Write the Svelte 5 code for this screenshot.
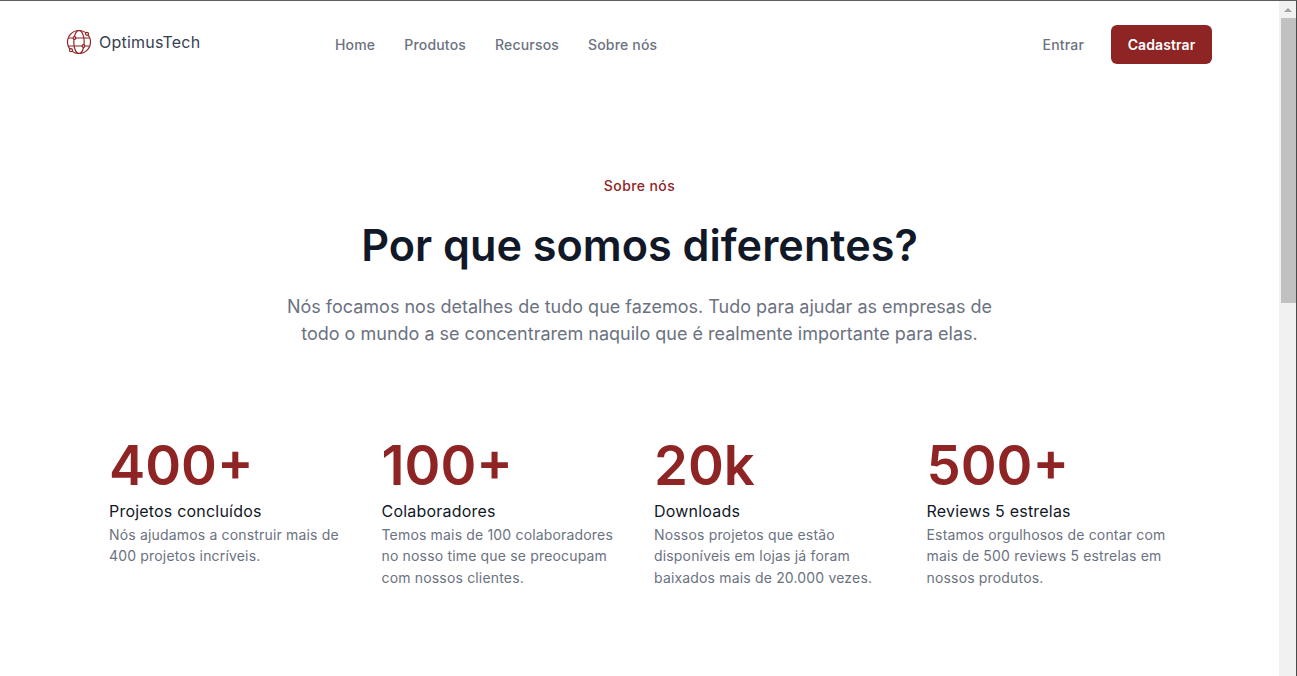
<script lang="ts">
  const links = ['Home', 'Produtos', 'Recursos', 'Sobre nós'];

  const stats = [
    { value: '400+', title: 'Projetos concluídos', text: 'Nós ajudamos a construir mais de 400 projetos incríveis.' },
    { value: '100+', title: 'Colaboradores', text: 'Temos mais de 100 colaboradores no nosso time que se preocupam com nossos clientes.' },
    { value: '20k', title: 'Downloads', text: 'Nossos projetos que estão disponíveis em lojas já foram baixados mais de 20.000 vezes.' },
    { value: '500+', title: 'Reviews 5 estrelas', text: 'Estamos orgulhosos de contar com mais de 500 reviews 5 estrelas em nossos produtos.' }
  ];
</script>

<div class="window">
  <main class="page">
    <header class="nav">
      <a class="brand" href="#top">
        <svg width="26" height="26" viewBox="0 0 26 26" fill="none" stroke="#8f2424" stroke-width="1.2">
          <circle cx="13" cy="13" r="11.5" />
          <ellipse cx="13" cy="13" rx="5.2" ry="11.5" />
          <path d="M2.4 9h21.2M2.4 17h21.2" />
          <circle cx="21" cy="4.8" r="1.5" fill="#fff" />
          <circle cx="5" cy="21.2" r="1.5" fill="#fff" />
          <circle cx="17.5" cy="17" r="1.3" fill="#fff" />
          <circle cx="8.5" cy="9" r="1.3" fill="#fff" />
        </svg>
        <span>OptimusTech</span>
      </a>
      <nav class="links">
        {#each links as link}
          <a href="#top">{link}</a>
        {/each}
      </nav>
      <div class="actions">
        <a class="login" href="#top">Entrar</a>
        <button type="button" class="signup">Cadastrar</button>
      </div>
    </header>

    <section class="hero">
      <p class="eyebrow">Sobre nós</p>
      <h1>Por que somos diferentes?</h1>
      <p class="lead">
        Nós focamos nos detalhes de tudo que fazemos. Tudo para ajudar as empresas de todo o mundo a se concentrarem naquilo que é realmente importante para elas.
      </p>
    </section>

    <section class="stats">
      {#each stats as stat}
        <article class="stat">
          <div class="value">{stat.value}</div>
          <h3>{stat.title}</h3>
          <p>{stat.text}</p>
        </article>
      {/each}
    </section>
  </main>

  <aside class="scrollbar">
    <div class="arrow"></div>
    <div class="thumb"></div>
  </aside>
</div>

<style>
  :global(body) {
    margin: 0;
    overflow: hidden;
    background: #fff;
  }

  .window {
    display: flex;
    height: 676px;
    border-top: 1px solid #5f5f5f;
    border-right: 1px solid #4a4a4a;
    box-sizing: border-box;
    overflow: hidden;
    font-family: Inter, 'Liberation Sans', sans-serif;
  }

  .page {
    flex: 1;
    min-width: 0;
    background: #fff;
  }

  .nav {
    display: flex;
    align-items: flex-start;
    padding: 24px 67px 0 66px;
    height: 120px;
    box-sizing: border-box;
  }

  .brand {
    display: flex;
    align-items: center;
    gap: 7px;
    width: 269px;
    margin-top: 4px;
    color: #374151;
    font-size: 16px;
    font-weight: 400;
    letter-spacing: 0.22px;
    text-decoration: none;
  }

  .links {
    display: flex;
    gap: 29px;
    margin-top: 11px;
  }

  .links a,
  .login {
    color: #6b7280;
    font-size: 14px;
    font-weight: 500;
    line-height: 17px;
    letter-spacing: 0.18px;
    text-decoration: none;
  }

  .actions {
    display: flex;
    align-items: center;
    gap: 27px;
    margin-left: auto;
  }

  .signup {
    width: 101px;
    height: 39px;
    border: 0;
    border-radius: 6px;
    background: #8f2424;
    color: #fff;
    font: 600 14px Inter, 'Liberation Sans', sans-serif;
    letter-spacing: 0.1px;
  }

  .hero {
    margin-top: 55px;
    text-align: center;
  }

  .eyebrow {
    margin: 0;
    color: #8f2424;
    font-size: 14px;
    font-weight: 500;
    line-height: 20px;
    letter-spacing: 0.4px;
  }

  h1 {
    margin: 23px 0 0;
    color: #111827;
    font-size: 43.2px;
    font-weight: 600;
    line-height: 52px;
  }

  .lead {
    width: 720px;
    margin: 22px auto 0;
    color: #6b7280;
    font-size: 18px;
    line-height: 27px;
  }

  .stats {
    display: grid;
    grid-template-columns: repeat(4, 1fr);
    gap: 29px;
    width: 1061px;
    margin: 85px auto 0;
  }

  .value {
    color: #8f2424;
    font-size: 54.4px;
    font-weight: 600;
    line-height: 67px;
  }

  h3 {
    margin: 1px 0 0;
    color: #111827;
    font-size: 16px;
    font-weight: 400;
    line-height: 22px;
    letter-spacing: 0.2px;
  }

  .stat p {
    margin: 1.8px 0 0;
    color: #6b7280;
    font-size: 14px;
    line-height: 21.5px;
    letter-spacing: 0.17px;
  }

  .scrollbar {
    display: flex;
    flex-direction: column;
    align-items: center;
    width: 17px;
    background: #f1f1f1;
  }

  .arrow {
    width: 0;
    height: 0;
    margin: 7px 0 6px;
    border-left: 4px solid transparent;
    border-right: 4px solid transparent;
    border-bottom: 4px solid #a3a3a3;
  }

  .thumb {
    align-self: flex-end;
    width: 15px;
    height: 285px;
    background: #c1c1c1;
  }
</style>
